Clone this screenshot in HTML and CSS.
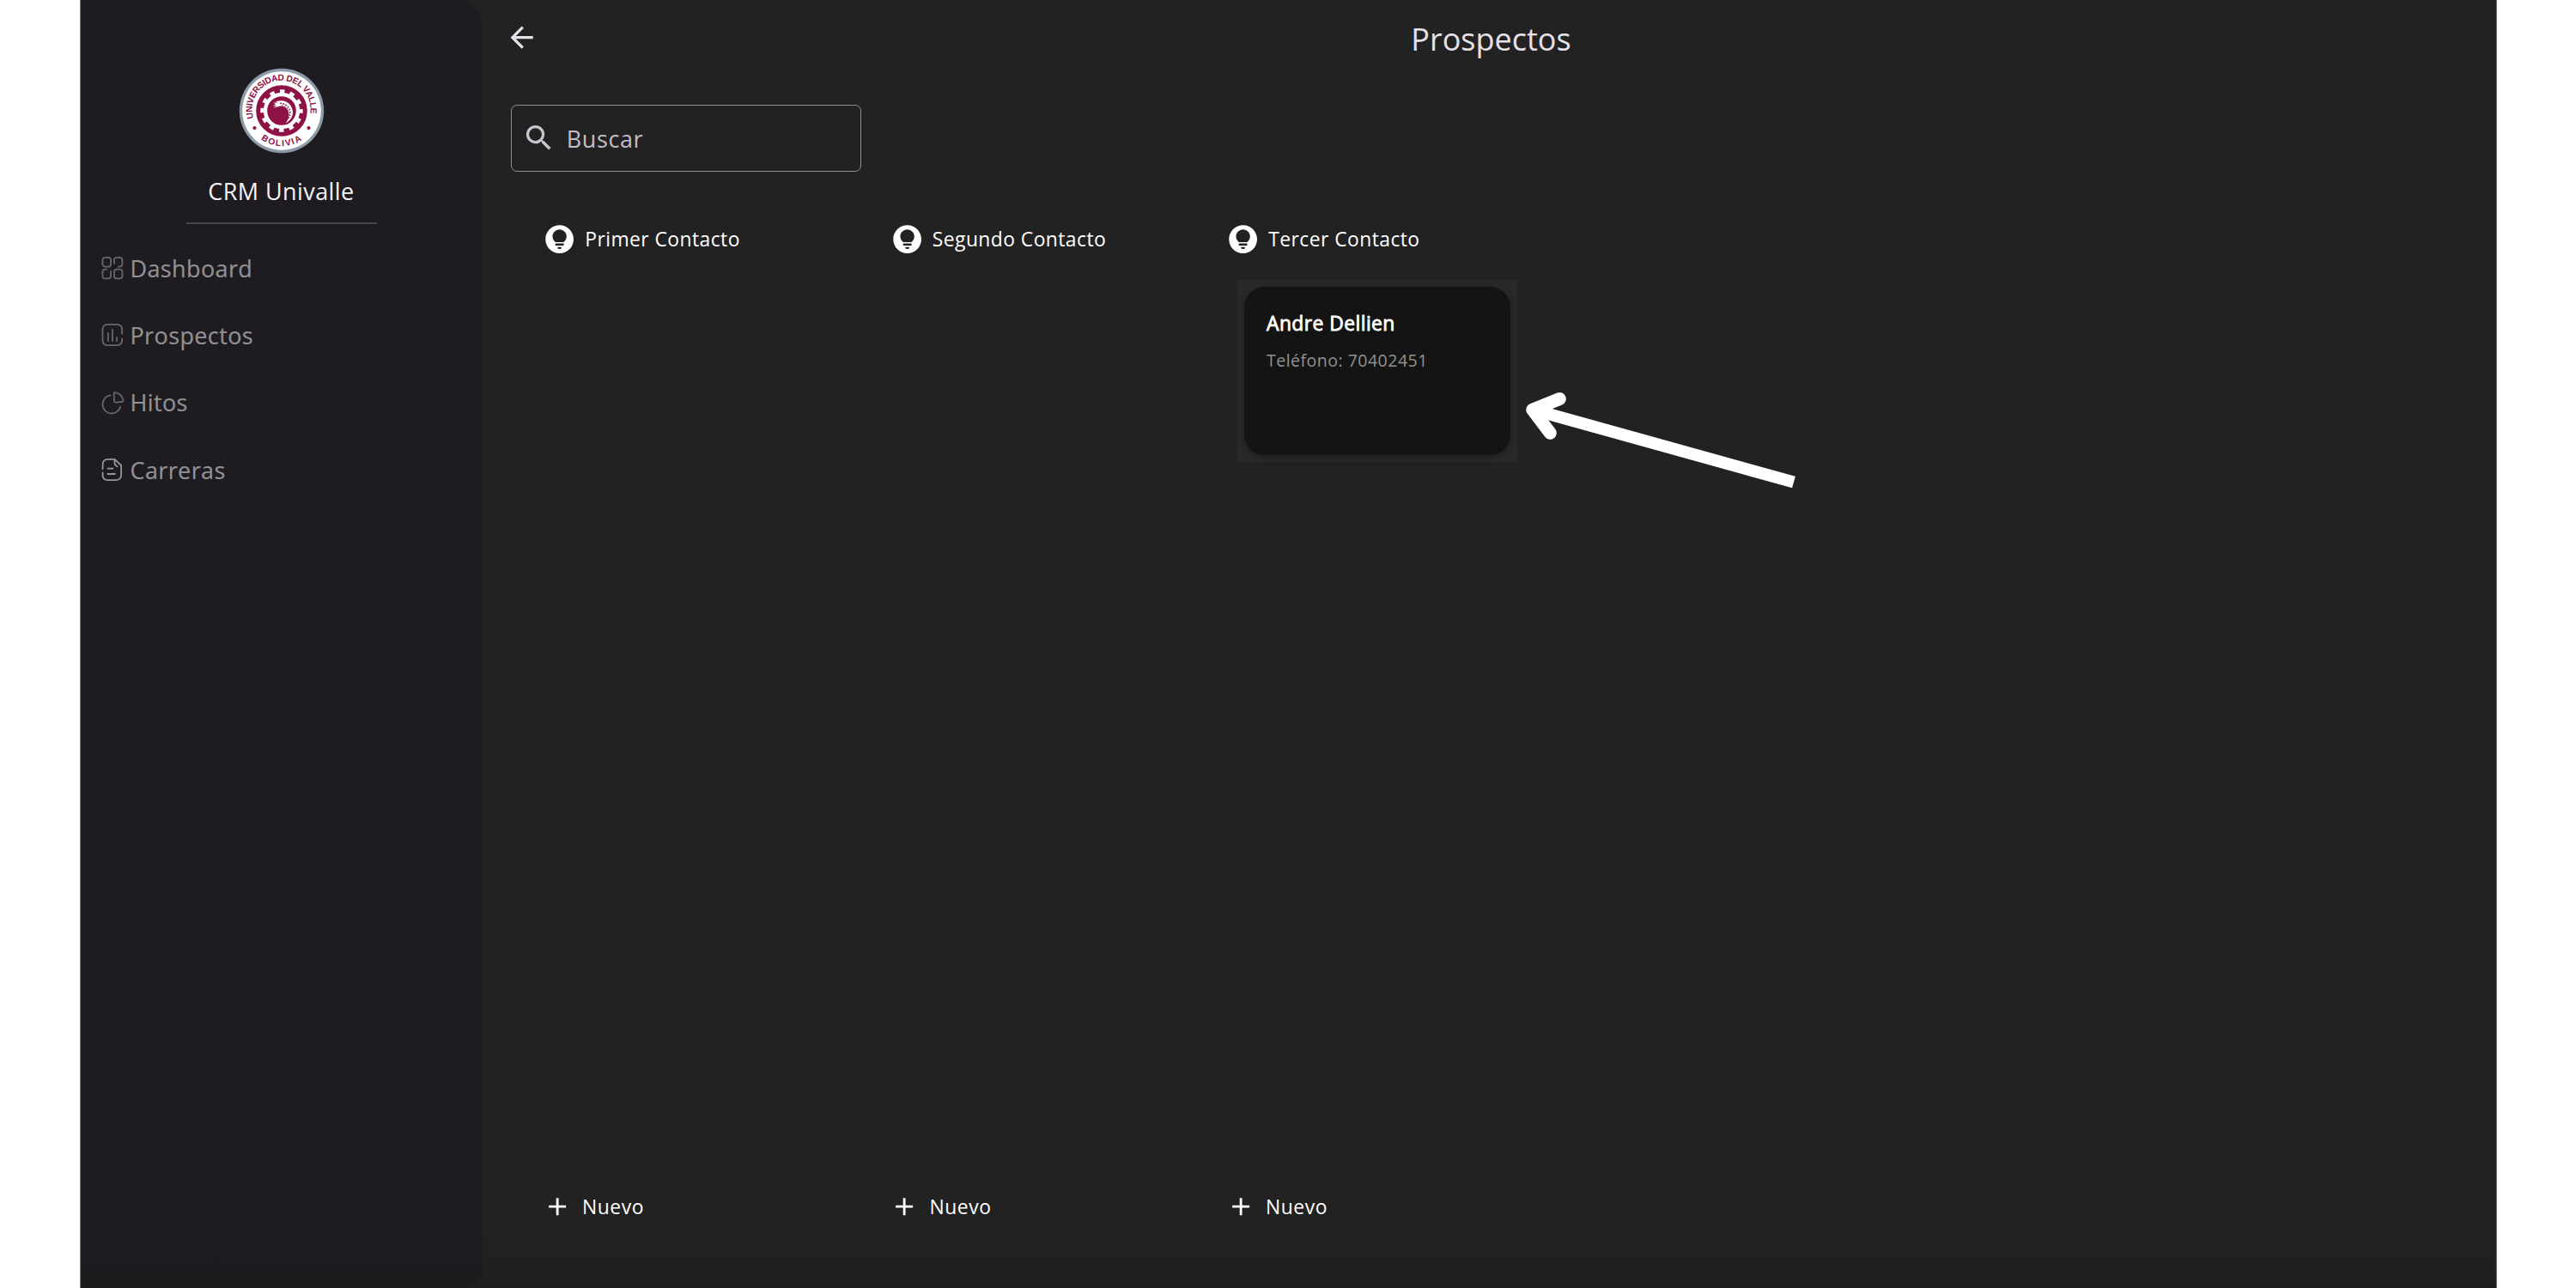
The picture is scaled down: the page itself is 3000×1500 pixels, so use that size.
FILE: index.html
```html
<!DOCTYPE html>
<html lang="es">
<head>
<meta charset="utf-8">
<title>CRM Univalle</title>
<link rel="stylesheet" href="styles.css">
</head>
<body>
<svg class="sprite" aria-hidden="true">
  <symbol id="bulb" viewBox="0 0 24 24"><path d="M12 2C6.48 2 2 6.48 2 12s4.48 10 10 10 10-4.48 10-10S17.52 2 12 2zm0 17c-.83 0-1.500-.67-1.500-1.500h3c0 .83-.67 1.500-1.500 1.500zm3-2.500H9V15h6v1.500zM14.970 14H9.030C7.800 13.090 7 11.640 7 10c0-2.760 2.240-5 5-5s5 2.240 5 5c0 1.640-.8 3.090-2.030 4z"/></symbol>
  <symbol id="plus" viewBox="0 0 24 24"><path d="M19 13h-6v6h-2v-6H5v-2h6V5h2v6h6v2z"/></symbol>
</svg>
<div class="app">
  <aside class="sidebar">
    <svg class="logo" viewBox="0 0 100 100">
      <defs>
        <path id="arcTop" d="M17.100 58.500A34 34 0 1 1 80.500 63"/>
        <path id="arcBottom" d="M25.900 83.200A41 41 0 0 0 76 82"/>
      </defs>
      <circle cx="50" cy="50" r="49.200" fill="#8d9ba8"/>
      <circle cx="50" cy="50" r="45.800" fill="#fff"/>
      <circle cx="50" cy="50" r="29.800" fill="#8e1246"/>
      <circle cx="50" cy="50" r="22.700" fill="none" stroke="#fff" stroke-width="4" stroke-dasharray="5.600 6.286" stroke-dashoffset="2.800"/>
      <circle cx="50" cy="50" r="19" fill="none" stroke="#fff" stroke-width="4.400"/>
      <path fill="#fff" d="M40.500 40.200l5 .8-2.500-1.600c7-2.400 14-.8 17.500 4.600 4.500 7 3.200 15.500-6 20.700 4.200-5 4.800-10 2.700-15.200-2-4.500-6-5.500-10-4.800-2.300.4-4.500 1.300-7 2.300l4.300-3.200-5 .6 3.500-2z"/>
      <path fill="none" stroke="#8e1246" stroke-width="1.500" stroke-dasharray="1.800 1.500" d="M48 41.300c6.500.4 11.500 4 11.800 10.500 0 3-.8 5-2 7"/>
      <path fill="none" stroke="#8e1246" stroke-width="1" stroke-dasharray="1.500 1.800" d="M50 43.800c4.500.6 7.500 3.500 8 8 .1 2-.2 4-.8 6"/>
      <circle cx="18.500" cy="70" r="2.100" fill="#8e1246"/>
      <circle cx="81.500" cy="70" r="2.100" fill="#8e1246"/>
      <text class="seal"><textPath href="#arcTop" textLength="121" lengthAdjust="spacing">UNIVERSIDAD DEL VALLE</textPath></text>
      <text class="seal"><textPath href="#arcBottom" textLength="50.500" lengthAdjust="spacing">BOLIVIA</textPath></text>
    </svg>
    <h1 class="brand">CRM Univalle</h1>
    <nav class="nav">
      <a class="nav-item">
        <svg class="nav-icon" viewBox="0 0 28 28"><rect x="2.500" y="1.800" width="9.600" height="10.800" rx="3.200"/><path d="M16 9V5q0-3.200 3.200-3.200h3q3.200 0 3.200 3.200v4.400q0 3.200-3.200 3.200h-1.500"/><path d="M12.100 18v5.200q0 3.200-3.200 3.200H5.700q-3.200 0-3.200-3.200v-4.400q0-3.200 3.200-3.200h1.500"/><rect x="16" y="15.600" width="9.500" height="10.800" rx="3.200"/></svg>
        Dashboard</a>
      <a class="nav-item">
        <svg class="nav-icon" viewBox="0 0 28 28"><path d="M25.200 12.800V8.300q0-6.500-6.500-6.500H9q-6.500 0-6.500 6.500v11.400q0 6.500 6.500 6.500h9.700q6.500 0 6.500-6.500V18.500M9 12v9M14 8v13M19 17v4"/></svg>
        Prospectos</a>
      <a class="nav-item">
        <svg class="nav-icon" viewBox="0 0 28 28"><path d="M11.500 5.400A10.600 10.600 0 1 0 23.300 18.500M15.600 3.500q0-1.700 1.700-1.400 7.500 1.600 9.200 9 .4 1.900-1.500 1.900l-7.600.6q-1.200 0-1.300-1.200z"/></svg>
        Hitos</a>
      <a class="nav-item">
        <svg class="nav-icon bright" viewBox="0 0 28 28"><path d="M2.600 13V8.200q0-6.400 6.400-6.400h7.500L24.100 9v10.800q0 6.400-6.400 6.400H8.500Q2.600 26.200 2.600 20.300V17.500M16.500 1.800v4.400q0 2.600 3.200 4M8.500 12.600h6M8.500 19h8.500"/></svg>
        Carreras</a>
    </nav>
  </aside>
  <main class="main">
    <header class="topbar">
      <svg class="back" viewBox="0 0 24 24"><path d="M20 11H7.830l5.590-5.590L12 4l-8 8 8 8 1.410-1.410L7.830 13H20v-2z"/></svg>
      <h2 class="title">Prospectos</h2>
    </header>
    <label class="search">
      <svg class="search-icon" viewBox="0 0 24 24"><path d="M15.500 14h-.79l-.28-.27A6.471 6.471 0 0 0 16 9.500 6.500 6.500 0 1 0 9.500 16c1.610 0 3.090-.59 4.230-1.570l.27.28v.79l5 4.990L20.490 19l-4.990-5zm-6 0C7.010 14 5 11.990 5 9.500S7.010 5 9.500 5 14 7.010 14 9.500 11.990 14 9.500 14z"/></svg>
      <span>Buscar</span>
    </label>
    <div class="board">
      <section class="column">
        <h3 class="column-head"><svg class="bulb"><use href="#bulb"/></svg>Primer Contacto</h3>
        <div class="cards"></div>
        <button class="add"><svg class="plus"><use href="#plus"/></svg>Nuevo</button>
      </section>
      <section class="column">
        <h3 class="column-head"><svg class="bulb"><use href="#bulb"/></svg>Segundo Contacto</h3>
        <div class="cards"></div>
        <button class="add"><svg class="plus"><use href="#plus"/></svg>Nuevo</button>
      </section>
      <section class="column">
        <h3 class="column-head"><svg class="bulb"><use href="#bulb"/></svg>Tercer Contacto</h3>
        <div class="cards">
          <div class="card-slot">
            <article class="card">
              <h4 class="name">Andre Dellien</h4>
              <p class="phone">Teléfono: 70402451</p>
            </article>
          </div>
        </div>
        <button class="add"><svg class="plus"><use href="#plus"/></svg>Nuevo</button>
      </section>
    </div>
  </main>
  <svg class="pointer" viewBox="0 0 330 130"><path stroke-width="14" d="M15 27L319 111.500"/><path stroke-width="15" stroke-linecap="round" stroke-linejoin="round" d="M46.300 14.500L14.800 27.300l20.500 27"/></svg>
</div>
</body>
</html>
```

FILE: styles.css
```css
* { box-sizing: border-box; }

body {
  margin: 0;
  background: #fff;
  font-family: "Open Sans", "Noto Sans", sans-serif;
}

h1, h2, h3, h4, p { margin: 0; font-weight: 400; }

.sprite { display: none; }

svg { flex: none; display: block; }

.app {
  position: relative;
  display: flex;
  width: 2815px;
  height: 1500px;
  margin: 0 auto;
  border: solid #77777a;
  border-width: 0 1px;
  background: linear-gradient(#222 1440px, #1e1e1e 1500px);
  overflow: hidden;
}

.sidebar {
  display: flex;
  flex-direction: column;
  align-items: center;
  width: 468px;
  padding-top: 79px;
  border-radius: 0 28px 20px 8px;
  background: linear-gradient(#1e1c21 1440px, #1b1a1c 1500px);
}

.logo { width: 100px; height: 100px; }

.seal {
  font: bold 10.2px "Liberation Sans", Arial, sans-serif;
  fill: #8e1246;
}

.brand {
  width: 222px;
  margin-top: 26px;
  padding-bottom: 18px;
  border-bottom: 2px solid #47454c;
  color: #f4f3f5;
  font-size: 27px;
  line-height: 36px;
  letter-spacing: .42px;
  white-space: nowrap;
  text-align: center;
}

.nav {
  align-self: stretch;
  padding: 12px 0 0 23px;
}

.nav-item {
  display: flex;
  align-items: center;
  gap: 7px;
  height: 78.3px;
  color: #929194;
  font-size: 27px;
  letter-spacing: .38px;
  -webkit-text-stroke: .2px;
}

.nav-icon {
  width: 28px;
  height: 28px;
  fill: none;
  stroke: #69676c;
  stroke-width: 1.8;
  stroke-linecap: round;
}

.nav-icon.bright { stroke: #98969b; }

.main {
  display: flex;
  flex: 1;
  flex-direction: column;
  padding: 0 28px 0 33px;
}

.topbar {
  display: grid;
  grid-template-columns: 1fr auto 1fr;
  align-items: center;
  height: 89px;
  color: #e6e0e9;
}

.back {
  width: 39.3px;
  height: 39.3px;
  margin: -1px 0 0 -7px;
  fill: #e6e0e9;
}

.title { padding-top: 2px; font-size: 36px; line-height: 50px; }

.search {
  display: flex;
  align-items: center;
  gap: 13px;
  width: 408px;
  height: 78px;
  margin-top: 33px;
  padding-left: 12px;
  border: 1.6px solid #938f99;
  border-radius: 7px;
  color: #c3bcc8;
  font-size: 27px;
  letter-spacing: .6px;
}

.search-icon { width: 39.3px; height: 39.3px; fill: #cac4d0; }

.board {
  display: grid;
  flex: 1;
  grid-template-columns: 404.500px 391.500px 360px;
  padding: 59px 0 77px 37.500px;
}

.column { display: flex; flex-direction: column; }

.column-head,
.add {
  display: flex;
  align-items: center;
  color: #fff;
  font: 400 22.9px/39px "Open Sans", "Noto Sans", sans-serif;
}

.column-head { gap: 10px; height: 39px; letter-spacing: .42px; }

.bulb { width: 39.3px; height: 39.3px; fill: #fff; }

.cards { flex: 1; }

.card-slot {
  width: 326px;
  height: 212px;
  margin: 28px 0 0 13px;
  padding: 8px;
  background: #292929;
}

.card {
  height: 196px;
  padding: 28px 26px;
  border-radius: 24px;
  background: #141414;
  box-shadow: 0 3px 8px rgba(0, 0, 0, .28);
}

.name {
  color: #fff;
  font-size: 22.9px;
  line-height: 30px;
  letter-spacing: .42px;
  -webkit-text-stroke: .8px #fff;
}

.phone {
  margin-top: 14px;
  color: #929292;
  font-size: 19.6px;
  line-height: 27px;
  letter-spacing: .45px;
}

.add {
  gap: 12px;
  height: 36px;
  padding: 0;
  border: 0;
  background: none;
  letter-spacing: .55px;
}

.plus { width: 34.3px; height: 34.3px; margin-left: -.4px; fill: #fff; }

/* hand-placed arrow that points at the card */
.pointer {
  position: absolute;
  left: 1676px;
  top: 450px;
  width: 330px;
  height: 130px;
  fill: none;
  stroke: #fff;
}
```
